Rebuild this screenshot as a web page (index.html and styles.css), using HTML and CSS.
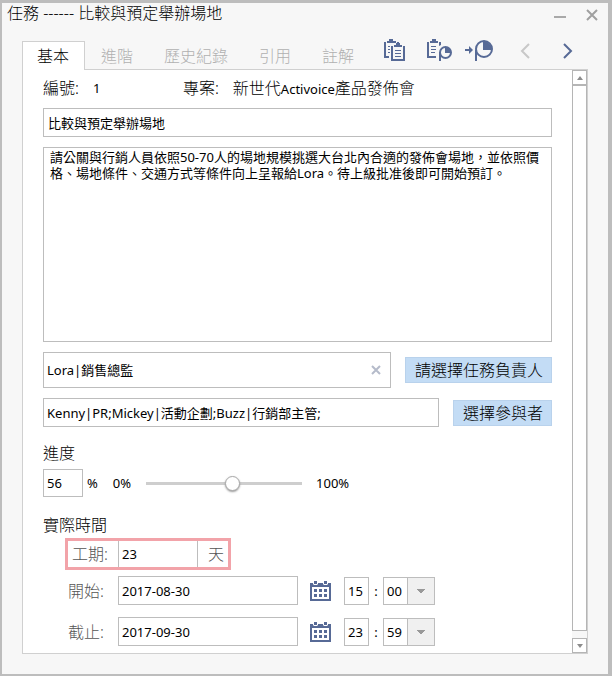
FILE: index.html
```html
<!DOCTYPE html>
<html lang="zh-Hant">
<head>
<meta charset="utf-8">
<meta name="viewport" content="width=device-width, initial-scale=1">
<title>任務</title>
<link rel="stylesheet" href="styles.css">
</head>
<body>
<svg class="sprite" aria-hidden="true">
  <symbol id="calendar" viewBox="0 0 21 21">
    <path fill="currentColor" fill-rule="evenodd" d="M0 3H3V4L4 5H7L8 4V3H13V4L14 5H17L18 4V3H21V21H0ZM2 7V19H19V7Z"/>
    <path fill="currentColor" d="M4 1H7V4H4ZM14 1H17V4H14ZM4 9H7V12H4ZM9 9H12V12H9ZM14 9H17V12H14ZM4 14H7V17H4ZM9 14H12V17H9ZM14 14H17V17H14Z"/>
  </symbol>
</svg>
<main class="window">
  <header class="titlebar">
    <h1 class="title">任務 ------ 比較與預定舉辦場地</h1>
    <button class="icon-button" aria-label="最小化"><svg width="12" height="12"><path fill="#a9a9a9" d="M0 7H12V9H0Z"/></svg></button>
    <button class="icon-button" aria-label="關閉"><svg width="12" height="12"><path stroke="#a0a0a0" stroke-width="2" d="M1 1L11 11M11 1L1 11"/></svg></button>
  </header>
  <div class="bar">
    <nav class="tabs">
      <a class="tab active" href="#basic">基本</a>
      <a class="tab" href="#advanced">進階</a>
      <a class="tab" href="#history">歷史紀錄</a>
      <a class="tab" href="#reference">引用</a>
      <a class="tab" href="#notes">註解</a>
    </nav>
    <div class="toolbar">
      <button class="icon-button" aria-label="複製"><svg width="23" height="24" fill="#576a96">
        <path d="M1 3H3V17H6V19H1ZM4 2H6V0H10V2H13V4H4ZM14 3H16V4H14ZM5 7H7V8H5ZM5 10H7V11H5ZM5 13H7V14H5Z"/>
        <path d="M8 7H10V20H20V7H22V22H8ZM11 6H13V4H17V6H19V8H11ZM12 11H18V12H12ZM12 14H18V15H12ZM12 17H18V18H12Z"/>
      </svg></button>
      <button class="icon-button copy-progress" aria-label="複製進度"><svg width="26" height="24">
        <path fill="#576a96" d="M1 3H3V17H10V19H1ZM4 2H6V0H10V2H12V4H4ZM13 3H15V6L13 7ZM5 7H10V8H5ZM5 10H10V11H5ZM5 13H9V14H5ZM19 8V14H25A6 6 0 0 0 19 8ZM13 13H15V22H13Z"/>
        <circle cx="19.5" cy="13.5" r="5.5" fill="none" stroke="#576a96" stroke-width="2"/>
      </svg></button>
      <button class="icon-button" aria-label="移至進度"><svg width="30" height="24">
        <path fill="#576a96" d="M1 10H5V7L9 11L5 15V12H1ZM19 2V11H28A9 9 0 0 0 19 2ZM11 11H13V22H11Z"/>
        <circle cx="20" cy="10" r="8" fill="none" stroke="#576a96" stroke-width="2"/>
      </svg></button>
      <button class="icon-button previous" aria-label="上一個"><svg width="10" height="16"><path fill="none" stroke="#c8c8c8" stroke-width="2" d="M9 1L2 8L9 15"/></svg></button>
      <button class="icon-button next" aria-label="下一個"><svg width="10" height="16"><path fill="none" stroke="#576a96" stroke-width="2" d="M1 1L8 8L1 15"/></svg></button>
    </div>
  </div>
  <section class="panel" id="basic">
    <form class="form">
      <dl class="summary">
        <dt>編號:</dt><dd class="number">1</dd>
        <dt>專案:</dt><dd>新世代<span class="small">Activoice</span>產品發佈會</dd>
      </dl>
      <input class="field" aria-label="任務名稱" value="比較與預定舉辦場地">
      <textarea class="field description" aria-label="任務說明">請公關與行銷人員依照50-70人的場地規模挑選大台北內合適的發佈會場地，並依照價格、場地條件、交通方式等條件向上呈報給Lora。待上級批准後即可開始預訂。</textarea>
      <div class="row">
        <div class="field owner">
          <input class="plain" aria-label="任務負責人" value="Lora|銷售總監">
          <button type="button" class="icon-button" aria-label="清除"><svg width="10" height="10"><path stroke="#b5bbca" stroke-width="2" d="M1 1L9 9M9 1L1 9"/></svg></button>
        </div>
        <button type="button" class="action">請選擇任務負責人</button>
      </div>
      <div class="row">
        <input class="field" aria-label="參與者" value="Kenny|PR;Mickey|活動企劃;Buzz|行銷部主管;">
        <button type="button" class="action">選擇參與者</button>
      </div>
      <h2 class="heading"><label for="progress">進度</label></h2>
      <div class="progress">
        <input class="field percent" id="progress" value="56">
        <span class="unit">%</span>
        <span class="from">0%</span>
        <input type="range" class="slider" aria-label="進度" min="0" max="100" value="56">
        <span>100%</span>
      </div>
      <h2 class="heading second">實際時間</h2>
      <div class="times">
        <div class="duration">
          <label for="days">工期:</label>
          <input class="days" id="days" value="23">
          <span class="day-unit">天</span>
        </div>
        <div class="time-row">
          <label for="start">開始:</label>
          <input class="field date" id="start" value="2017-08-30">
          <button type="button" class="icon-button calendar" aria-label="選擇開始日期"><svg width="21" height="21"><use href="#calendar"/></svg></button>
          <input class="field hour" aria-label="開始時" value="15">
          <span class="colon">:</span>
          <select class="minute" aria-label="開始分"><option>00</option></select>
        </div>
        <div class="time-row">
          <label for="end">截止:</label>
          <input class="field date" id="end" value="2017-09-30">
          <button type="button" class="icon-button calendar" aria-label="選擇截止日期"><svg width="21" height="21"><use href="#calendar"/></svg></button>
          <input class="field hour" aria-label="截止時" value="23">
          <span class="colon">:</span>
          <select class="minute" aria-label="截止分"><option>59</option></select>
        </div>
      </div>
    </form>
    <div class="scrollbar">
      <button class="scroll-button" aria-label="向上捲動"><svg width="6" height="4"><path fill="#8c8c8c" d="M0 4L3 0L6 4Z"/></svg></button>
      <div class="thumb"></div>
      <button class="scroll-button" aria-label="向下捲動"><svg width="6" height="4"><path fill="#8c8c8c" d="M0 0L3 4L6 0Z"/></svg></button>
    </div>
  </section>
</main>
</body>
</html>
```
FILE: styles.css
```css
* { box-sizing: border-box; }

body {
  margin: 0;
  color: #000;
  font: 13px/16px "Noto Sans", "Noto Sans CJK TC", sans-serif;
}

input, textarea, select, button { margin: 0; color: inherit; font: inherit; }
input, textarea, select { border-radius: 0; outline: 0; }
svg { display: block; }
.sprite { position: absolute; width: 0; height: 0; }

.window {
  display: flex;
  flex-direction: column;
  min-height: 100vh;
  padding: 0 20px 20px;
  border: solid #bdbdbd;
  border-width: 3px 4px 2px 2px;
  background: #f7f7f7;
}

.icon-button { flex: none; padding: 0; border: 0; background: none; }

.titlebar {
  display: flex;
  gap: 20px;
  height: 34px;
  margin: 0 -10px 0 -15px;
}
.titlebar .icon-button { height: 24px; }
.title {
  flex: 1;
  margin: 0;
  font-size: 16px;
  font-weight: 300;
  line-height: 20px;
}

.bar { display: flex; justify-content: space-between; height: 32px; }
.tabs { display: flex; align-items: flex-end; margin-bottom: -1px; }
.tab {
  padding: 0 15px 0 16px;
  color: #b0b0b0;
  font-size: 16px;
  font-weight: 300;
  line-height: 28px;
  text-decoration: none;
}
.tab.active {
  z-index: 1;
  padding: 0 15px 0 14px;
  border: 1px solid #d0d0d0;
  border-bottom: 0;
  background: #fff;
  color: #000;
}
.toolbar { display: flex; align-items: center; gap: 12px; height: 28px; margin-right: 15px; }
.copy-progress { margin-left: 8px; }
.previous { margin-left: 14px; }
.next { margin-left: 21px; }

.panel {
  display: flex;
  flex: 1;
  border: 1px solid #d0d0d0;
  background: #fff;
}
.form { flex: 1; min-width: 0; padding: 6px 20px; }

.summary { display: flex; margin: 0 0 7px; font-size: 16px; font-weight: 300; line-height: 24px; }
.summary dd { margin: 0 0 0 14px; }
.summary .number { width: 90px; font-size: 13px; font-weight: 400; }
.small { font-size: 13px; font-weight: 400; }

.field {
  display: block;
  width: 100%;
  height: 29px;
  padding: 0 4px;
  border: 1px solid #bdbdbd;
  background: #fff;
}
.description { height: 195px; margin-top: 10px; padding: 1px 6px; resize: none; overflow: hidden; }

.row { display: flex; align-items: center; gap: 14px; margin-top: 10px; }
.owner { display: flex; align-items: center; flex: 1; height: 36px; padding: 0 9px 0 3px; }
.plain { flex: 1; min-width: 0; padding: 0; border: 0; }
.row input.field { flex: 1; min-width: 0; padding: 0 3px; }
.action {
  height: 26px;
  padding: 0 8px 0 9px;
  border: 1px solid #b9d2ec;
  background: #c3dcf5;
  font-size: 16px;
  font-weight: 300;
  line-height: 24px;
}

.heading { margin: 14px 0 4px; font-size: 16px; font-weight: 300; line-height: 24px; }
.heading.second { margin: 16px 0 1px; }

.progress { display: flex; align-items: center; }
.percent { width: 40px; height: 28px; padding: 0 3px; }
.unit { margin-left: 4px; }
.from { margin-left: 15px; }
.slider {
  width: 156px;
  height: 20px;
  margin: 0 14px 0 15px;
  appearance: none;
  background: linear-gradient(#cecece, #cecece) center / 100% 3px no-repeat;
}
.slider::-webkit-slider-thumb {
  width: 15px;
  height: 15px;
  appearance: none;
  border: 1px solid #aaa;
  border-radius: 50%;
  background: #fff;
  box-shadow: 0 1px 2px #999;
}

.times { padding-left: 22px; }
.times label, .day-unit { color: #555; font-size: 16px; font-weight: 300; line-height: 24px; }
.duration {
  display: flex;
  align-items: center;
  width: 166px;
  height: 32px;
  border: 3px solid #f2a3a9;
}
.duration label { width: 50px; padding-left: 4px; }
.days { width: 80px; height: 26px; padding: 0 3px; border: solid #bdbdbd; border-width: 0 1px; }
.day-unit { margin-left: 10px; }

.time-row { display: flex; align-items: center; margin-top: 12px; }
.duration + .time-row { margin-top: 6px; }
.time-row label { width: 53px; padding-left: 3px; }
.time-row .date { width: 180px; padding: 0 3px; }
.calendar { margin: 0 13px 0 12px; color: #576a96; }
.time-row .hour { width: 25px; height: 28px; padding: 0 3px; }
.colon { width: 14px; text-align: center; }
.minute {
  width: 52px;
  height: 28px;
  padding: 0 3px;
  appearance: none;
  border: 1px solid #bdbdbd;
  background:
    conic-gradient(from -45deg at 50% 100%, #999 90deg, transparent 0) right 9px center / 8px 4px no-repeat,
    linear-gradient(90deg, #bdbdbd 1px, #f0f0f0 1px) right / 27px 100% no-repeat,
    #fff;
}

.scrollbar { display: flex; flex-direction: column; width: 15px; background: #f7f7f7; }
.scroll-button {
  display: grid;
  place-items: center;
  height: 15px;
  padding: 0;
  border: 1px solid #b5b5b5;
  background: #fff;
}
.thumb { flex: 1; margin-bottom: 7px; border: 1px solid #b5b5b5; background: #fff; }
```
